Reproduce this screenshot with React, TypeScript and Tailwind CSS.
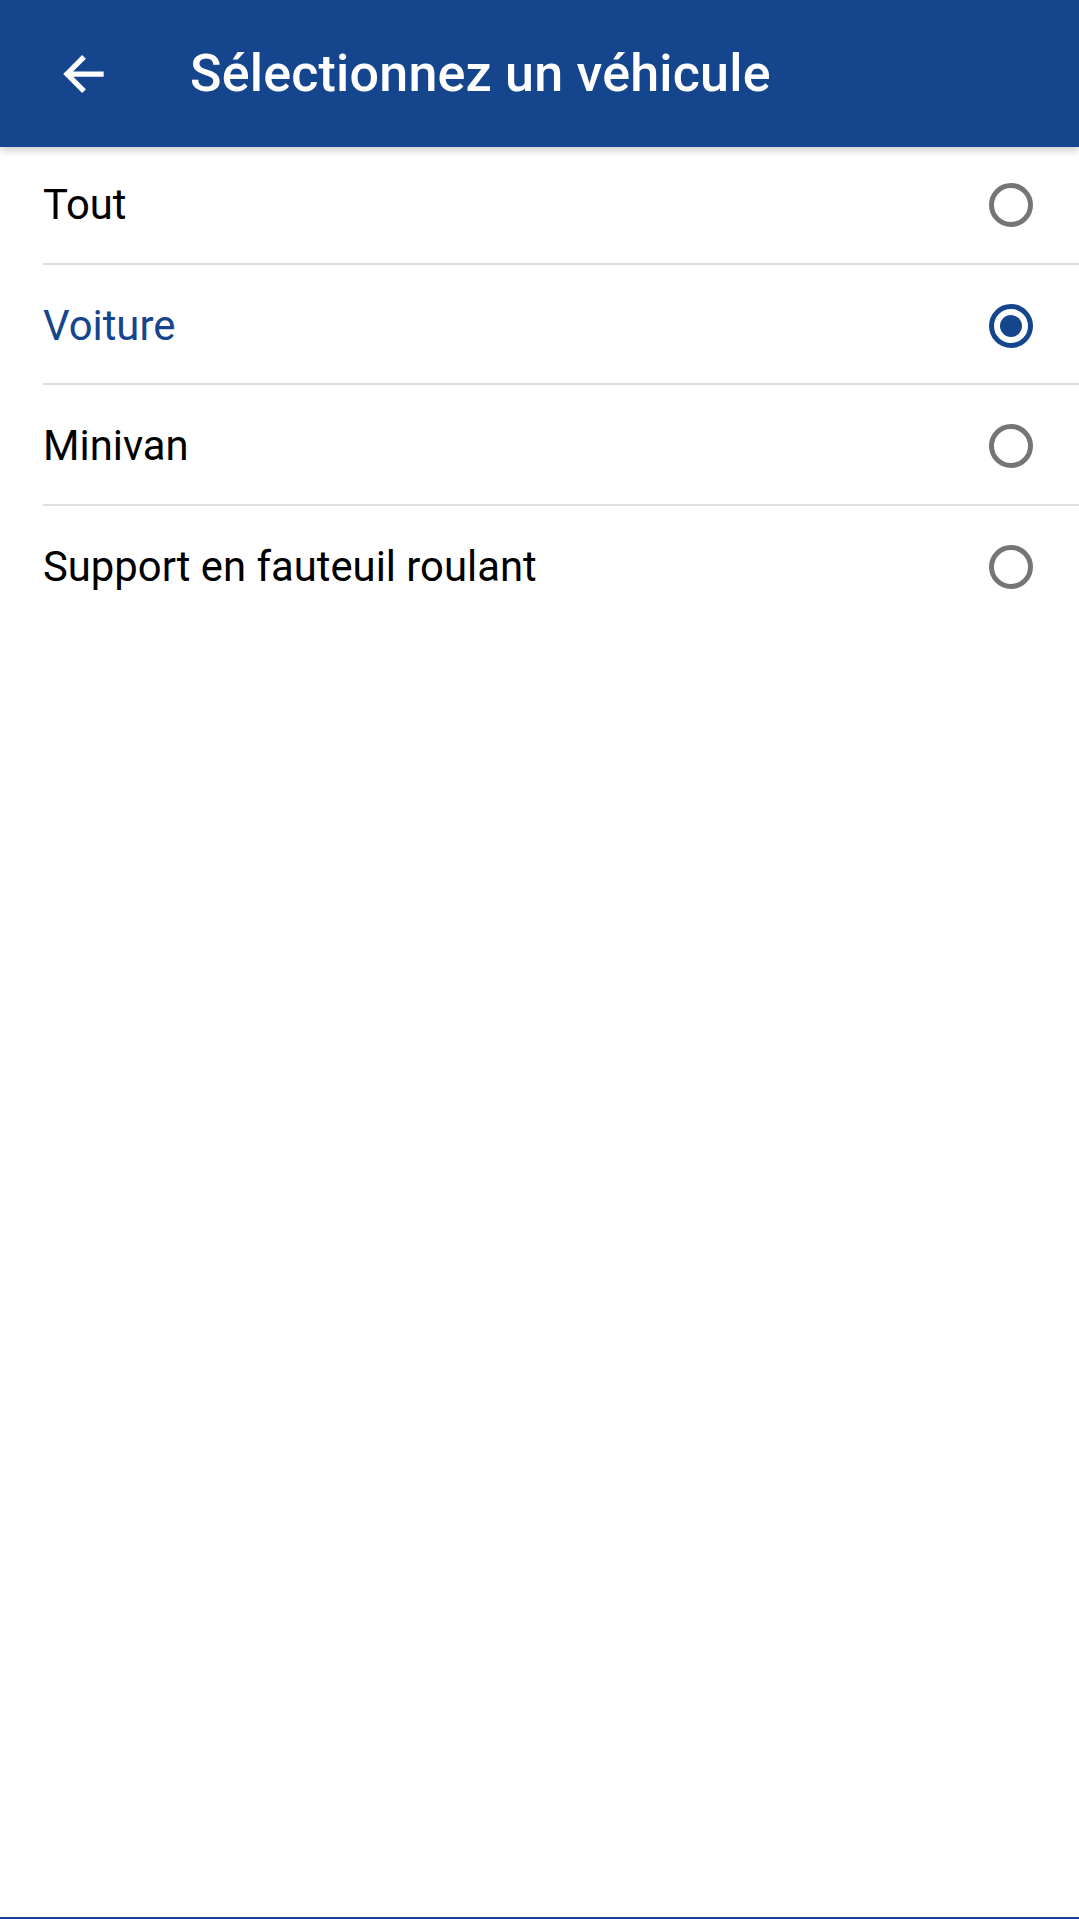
import React, { useState } from "react";

const items = ["Tout", "Voiture", "Minivan", "Support en fauteuil roulant"];

function Radio({ checked }: { checked: boolean }) {
  return (
    <div
      className={
        "w-[44px] h-[44px] rounded-full border-[5px] flex items-center justify-center " +
        (checked ? "border-[#15458d]" : "border-[#757575]")
      }
    >
      {checked && <div className="w-[22px] h-[22px] rounded-full bg-[#15458d]" />}
    </div>
  );
}

const rowCls = ["h-[116px]", "h-[118px] pt-[3px]", "h-[119px] pt-[3px]", "h-[118px] pt-[4px]"];

export default function App() {
  const [sel, setSel] = useState(1);
  return (
    <div
      className="w-[1079px] h-[1919px] bg-white relative overflow-hidden"
      style={{ fontFamily: "Roboto, 'Noto Sans', sans-serif" }}
    >
      <header className="h-[147px] bg-[#15458d] flex items-center relative z-10 shadow-[0_3px_8px_rgba(0,0,0,0.22)]">
        <div className="w-[190px] h-full flex items-center pl-[63px]">
          <svg width="42" height="42" viewBox="0 0 16 16" fill="none">
            <path
              d="M15.5 8H1.5M8 1.5L1.5 8L8 14.5"
              stroke="white"
              strokeWidth="2"
              strokeLinecap="butt"
              strokeLinejoin="miter"
            />
          </svg>
        </div>
        <h1 className="text-white text-[52px] font-medium leading-none tracking-[0.2px]">
          Sélectionnez un véhicule
        </h1>
      </header>
      <div className="flex flex-col">
        {items.map((it, i) => (
          <div key={it} className="flex flex-col">
            <button
              onClick={() => setSel(i)}
              className={
                "flex items-center justify-between pl-[43px] pr-[46px] text-left " + rowCls[i]
              }
            >
              <span
                className={
                  "text-[41.8px] leading-none " +
                  (sel === i ? "text-[#15458d]" : "text-black")
                }
              >
                {it}
              </span>
              <Radio checked={sel === i} />
            </button>
            {i < items.length - 1 && <div className="ml-[43px] h-[2px] bg-[#dedede]" />}
          </div>
        ))}
      </div>
      <div className="absolute bottom-0 left-0 right-0 h-[2px] bg-[#15458d]" />
    </div>
  );
}
